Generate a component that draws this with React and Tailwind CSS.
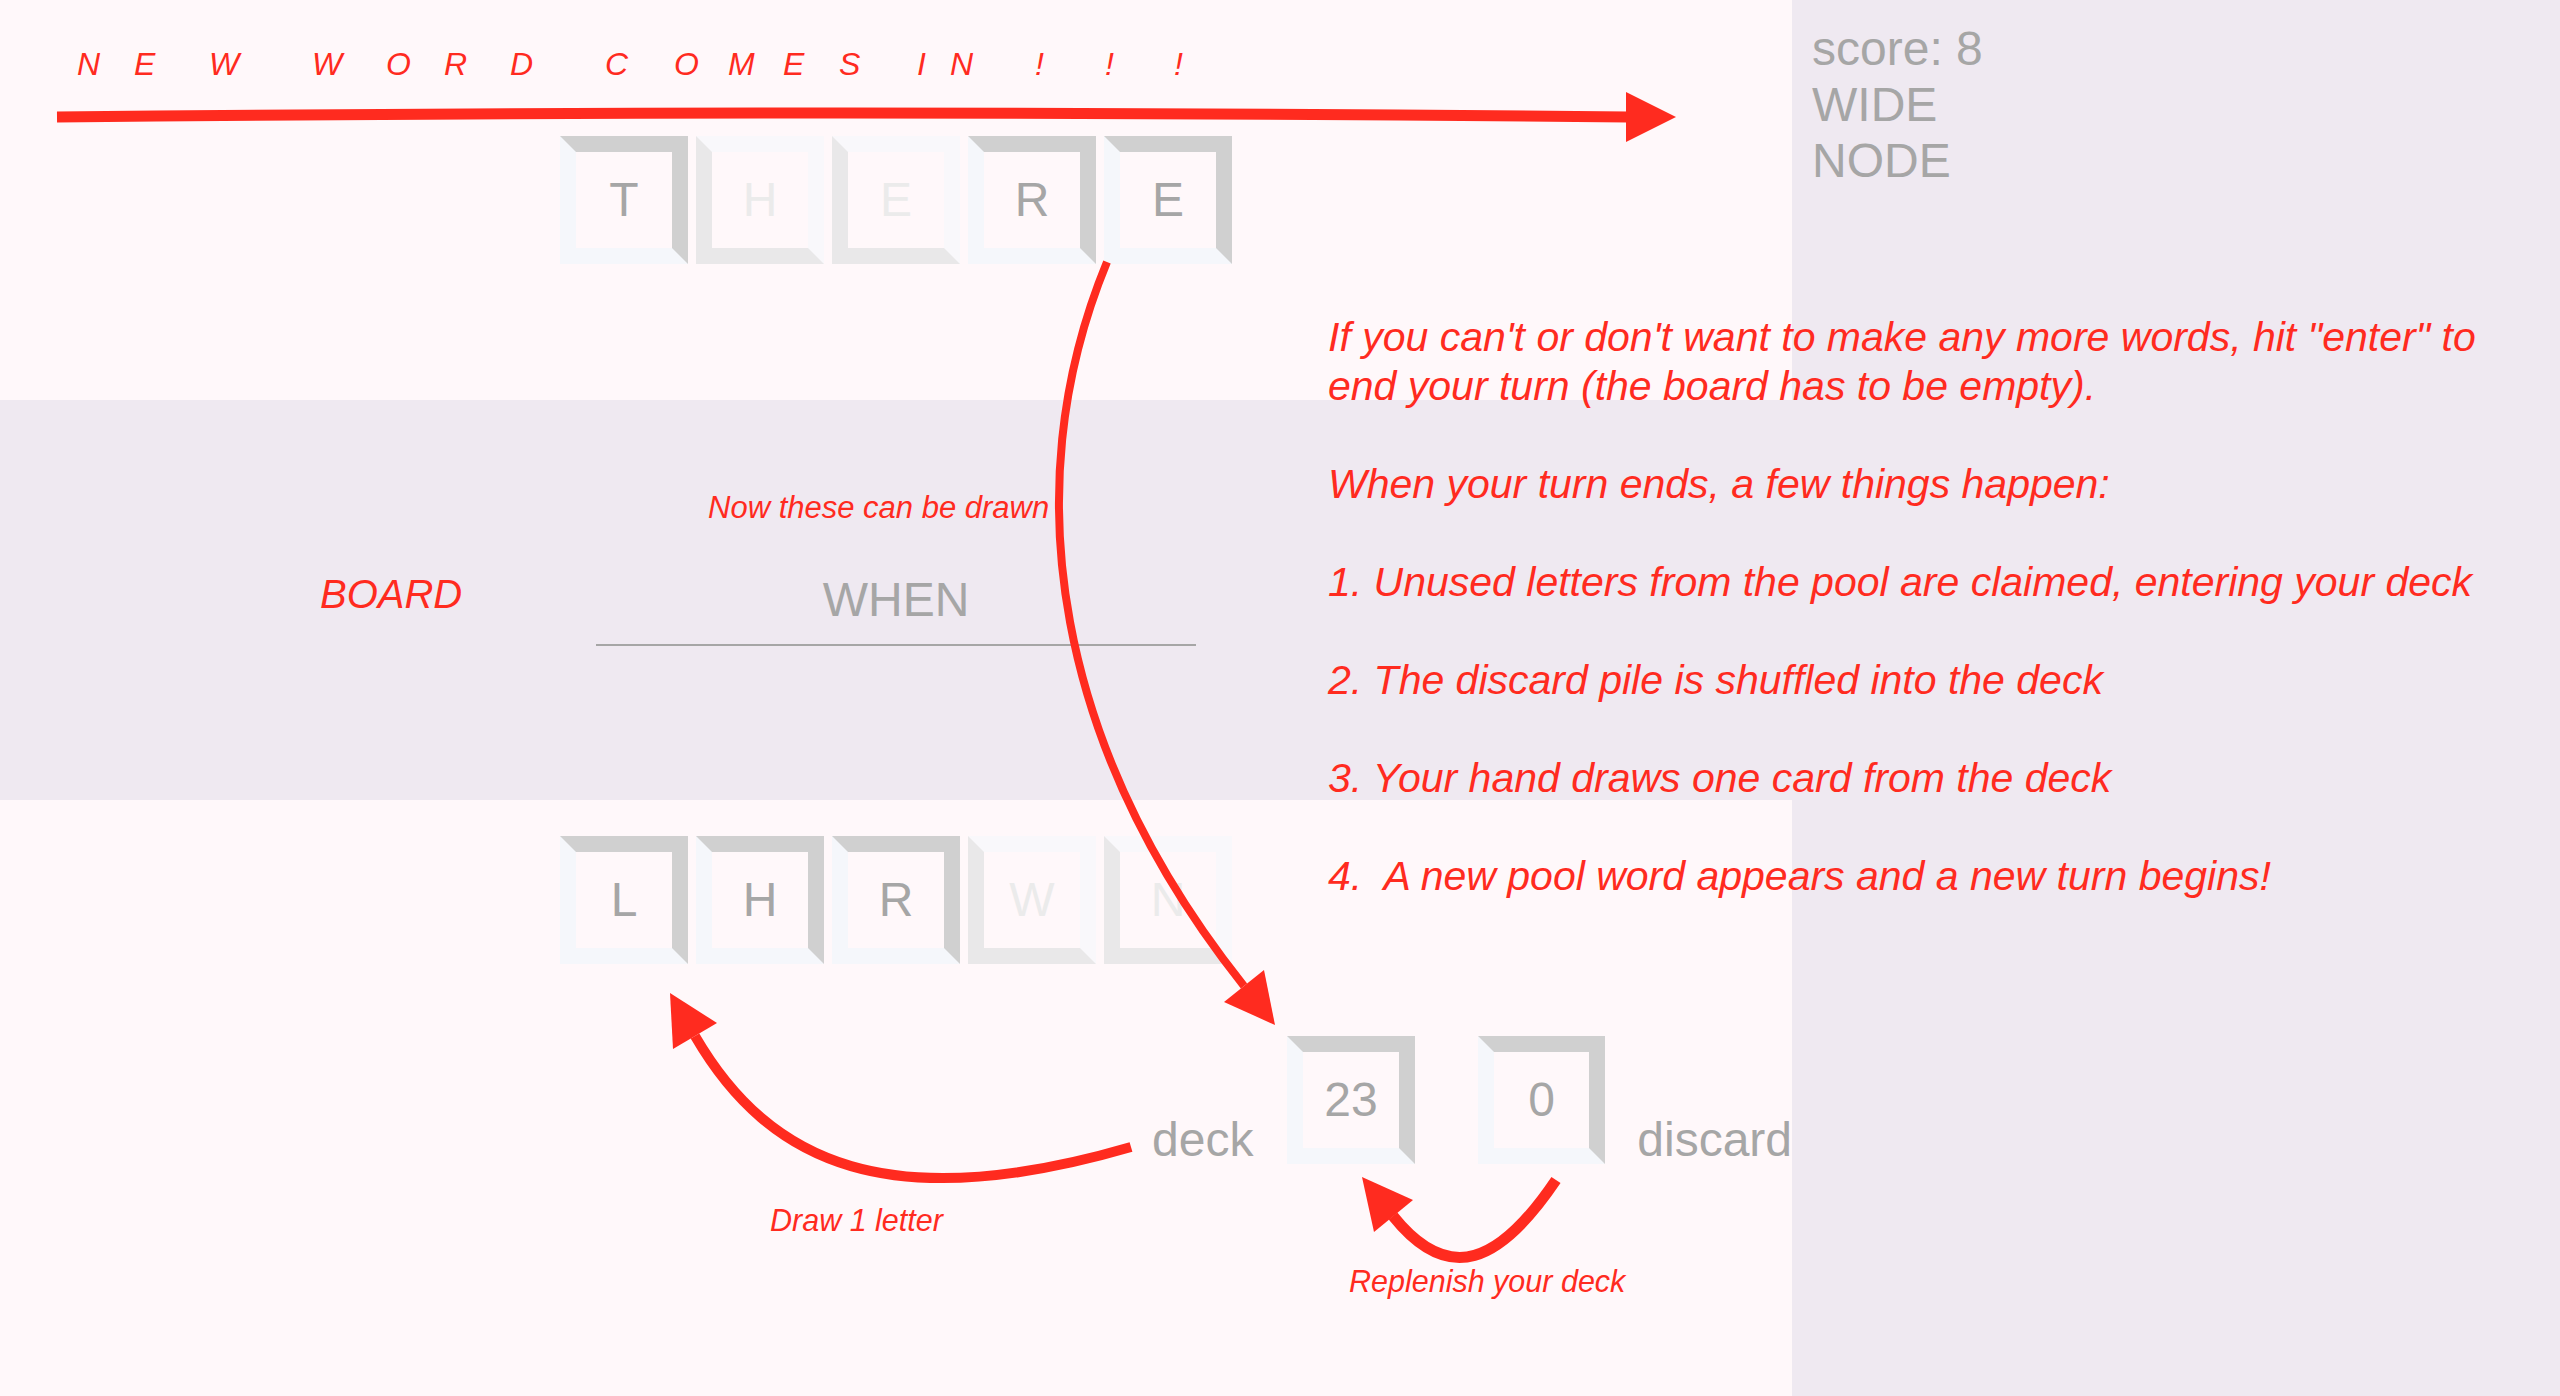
import React from 'react';

const RED = '#ff2b1f';

// pool word, hand letters: faded = already used / not drawable
const pool = [
  { ch: 'T', faded: false },
  { ch: 'H', faded: true },
  { ch: 'E', faded: true },
  { ch: 'R', faded: false },
  { ch: 'E', faded: false },
];
const hand = [
  { ch: 'L', faded: false },
  { ch: 'H', faded: false },
  { ch: 'R', faded: false },
  { ch: 'W', faded: true },
  { ch: 'N', faded: true },
];

// the flying-in title, each letter in its own box
const title = [
  ['N', 'w-[57px]'], ['E', 'w-[75px]'], ['W', 'w-[103px]'], ['W', 'w-[74px]'],
  ['O', 'w-[58px]'], ['R', 'w-[66px]'], ['D', 'w-[95px]'], ['C', 'w-[69px]'],
  ['O', 'w-[54px]'], ['M', 'w-[55px]'], ['E', 'w-[56px]'], ['S', 'w-[78px]'],
  ['I', 'w-[33px]'], ['N', 'w-[85px]'], ['!', 'w-[70px]'], ['!', 'w-[69px]'],
  ['!', 'w-[20px]'],
];

function Tile({ children, faded }) {
  return (
    <div
      className={`w-[128px] h-[128px] border-[16px] border-solid flex items-center justify-center text-[48px] leading-none ${
        faded
          ? 'border-t-[#f9f8fb] border-r-[#f9f8fb] border-b-[#e9e8e9] border-l-[#e9e8e9] text-[#ebebeb]'
          : 'border-t-[#d0d0d0] border-r-[#d0d0d0] border-b-[#f5f7fb] border-l-[#f5f7fb] text-[#a6a6a6]'
      }`}
    >
      {children}
    </div>
  );
}

function Arrows() {
  return (
    <svg className="absolute inset-0 pointer-events-none" width="2560" height="1396" viewBox="0 0 2560 1396">
      {/* new word comes in */}
      <path d="M57 117 Q 841 109 1628 117" stroke={RED} strokeWidth="11" fill="none" />
      <polygon points="1626,92 1676,117 1626,142" fill={RED} />

      {/* pool -> deck */}
      <path d="M1107 262 C1012 492 1058 752 1244 986" stroke={RED} strokeWidth="8" fill="none" />
      <polygon points="1224,1002 1264,970 1275,1025" fill={RED} />

      {/* deck -> hand */}
      <path d="M1131 1147 C891 1217 770 1165 695 1036" stroke={RED} strokeWidth="10" fill="none" />
      <polygon points="670,993 717,1023 673,1049" fill={RED} />

      {/* discard -> deck */}
      <path d="M1556 1180 C1500 1263 1449 1286 1393 1216" stroke={RED} strokeWidth="11" fill="none" />
      <polygon points="1362,1177 1374,1232 1413,1200" fill={RED} />
    </svg>
  );
}

export default function App() {
  return (
    <div className="relative flex w-[2560px] h-[1396px] overflow-hidden font-['Liberation_Sans',Arial,sans-serif]">
      {/* game column */}
      <div className="w-[1792px] flex flex-col bg-[#fff8fa]">
        <section className="h-[400px] pt-[136px] flex justify-center gap-[8px]">
          {pool.map((t, i) => (
            <Tile key={i} faded={t.faded}>{t.ch}</Tile>
          ))}
        </section>

        <section className="h-[400px] bg-[#efe9f1] pt-[176px] flex justify-center">
          <div className="w-[600px] h-[70px] border-b-2 border-[#a6a6a6] text-center text-[48px] leading-none text-[#a6a6a6]">
            WHEN
          </div>
        </section>

        <section className="flex-1 flex flex-col">
          <div className="pt-[36px] flex justify-center gap-[8px]">
            {hand.map((t, i) => (
              <Tile key={i} faded={t.faded}>{t.ch}</Tile>
            ))}
          </div>
          <div className="mt-[72px] pl-[1152px] flex items-end text-[48px] leading-none text-[#a6a6a6]">
            <span className="mr-[34px]">deck</span>
            <Tile>23</Tile>
            <div className="w-[64px]" />
            <Tile>0</Tile>
            <span className="ml-[32px]">discard</span>
          </div>
        </section>
      </div>

      {/* score column */}
      <div className="flex-1 bg-[#efe9f1] pl-[20px] pt-[21px] text-[48px] leading-[56px] text-[#a6a6a6]">
        <div>score: 8</div>
        <div>WIDE</div>
        <div>NODE</div>
      </div>

      {/* annotations */}
      <Arrows />

      <div className="absolute top-[48px] left-[77px] flex italic text-[32px] leading-none text-[#ff2b1f]">
        {title.map(([ch, w], i) => (
          <span key={i} className={w}>{ch}</span>
        ))}
      </div>

      <div className="absolute top-[574px] left-[320px] italic text-[40px] leading-none text-[#ff2b1f]">BOARD</div>
      <div className="absolute top-[492px] left-[708px] italic text-[31px] leading-none text-[#ff2b1f]">Now these can be drawn</div>
      <div className="absolute top-[1205px] left-[770px] italic text-[30.5px] leading-none text-[#ff2b1f]">Draw 1 letter</div>
      <div className="absolute top-[1266px] left-[1349px] italic text-[30.5px] leading-none text-[#ff2b1f]">Replenish your deck</div>

      <div className="absolute top-[313px] left-[1328px] italic text-[41px] leading-[49px] whitespace-pre text-[#ff2b1f]">
        <div>If you can't or don't want to make any more words, hit "enter" to</div>
        <div>end your turn (the board has to be empty).</div>
        <div>&nbsp;</div>
        <div>When your turn ends, a few things happen:</div>
        <div>&nbsp;</div>
        <div>1. Unused letters from the pool are claimed, entering your deck</div>
        <div>&nbsp;</div>
        <div>2. The discard pile is shuffled into the deck</div>
        <div>&nbsp;</div>
        <div>3. Your hand draws one card from the deck</div>
        <div>&nbsp;</div>
        <div>4.  A new pool word appears and a new turn begins!</div>
      </div>
    </div>
  );
}
